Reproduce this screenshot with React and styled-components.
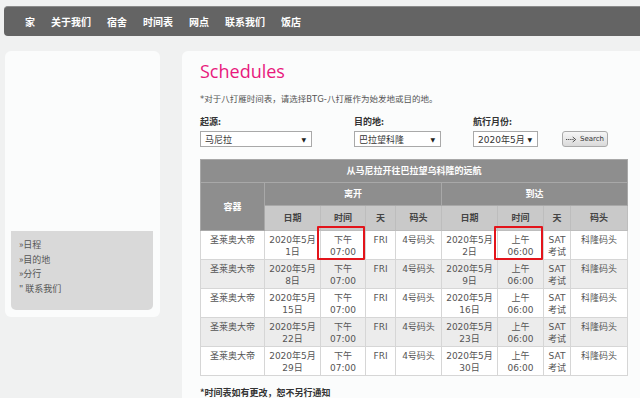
import styled, { createGlobalStyle } from "styled-components";

const GlobalStyle = createGlobalStyle`
  html, body {
    margin: 0;
    padding: 0;
    background: #f0f1f1;
    overflow: hidden;
  }
  body {
    font-family: "DejaVu Sans", "Noto Sans CJK SC", sans-serif;
    color: #555;
  }
`;

const navItems = ["家", "关于我们", "宿舍", "时间表", "网点", "联系我们", "饭店"];
const sideLinks = ["»日程", "»目的地", "»分行", "\" 联系我们"];

const rows = [
  { dep: "1日", arr: "2日" },
  { dep: "8日", arr: "9日" },
  { dep: "15日", arr: "16日" },
  { dep: "22日", arr: "23日" },
  { dep: "29日", arr: "30日" },
];

const Page = styled.div`
  width: 660px;
  padding: 6px 0 0 4px;
`;

const NavBar = styled.nav`
  height: 30px;
  background: #646464;
  border-radius: 4px 0 0 4px;
  border-top: 1px solid #8a8a8a;
  box-sizing: border-box;
  display: flex;
  align-items: center;
  gap: 16px;
  padding-left: 21px;
`;

const NavItem = styled.a`
  color: #fff;
  font-family: "Noto Sans CJK SC", sans-serif;
  font-weight: 700;
  font-size: 10px;
`;

const Body = styled.div`
  display: flex;
  gap: 22px;
  margin-top: 15px;
  align-items: flex-start;
`;

const Sidebar = styled.aside`
  width: 155px;
  height: 266px;
  margin-left: 1px;
  background: #fbfcfc;
  border-radius: 6px;
  box-sizing: border-box;
  display: flex;
  flex-direction: column;
  justify-content: flex-end;
  padding: 0 7px 7px 6px;
`;

const SideBox = styled.div`
  height: 79px;
  background: #d9d9d9;
  border-radius: 0 0 5px 5px;
  box-sizing: border-box;
  padding: 7px 8px;
  display: flex;
  flex-direction: column;
`;

const SideLink = styled.a`
  font-family: "Noto Sans CJK SC", sans-serif;
  font-size: 9px;
  line-height: 14.5px;
  color: #555;
`;

const Main = styled.main`
  flex: 1;
  height: 360px;
  background: #fbfcfc;
  border-radius: 6px 0 0 0;
  padding: 8px 0 0 18px;
  box-sizing: border-box;
`;

const Title = styled.h1`
  margin: 0;
  font-family: "Open Sans", sans-serif;
  font-weight: 400;
  font-size: 18px;
  line-height: 24px;
  color: #e8197d;
`;

const Note = styled.p`
  margin: 9px 0 0;
  font-family: "DejaVu Sans", "Noto Sans CJK SC", sans-serif;
  font-size: 8.5px;
  color: #555;
`;

const Form = styled.div`
  display: flex;
  align-items: flex-end;
  margin-top: 12px;
`;

const Field = styled.div`
  display: flex;
  flex-direction: column;
  width: ${(p) => p.w}px;
`;

const Label = styled.label`
  font-family: "Noto Sans CJK SC", sans-serif;
  font-weight: 700;
  font-size: 9px;
  color: #333;
  line-height: 12px;
  margin-bottom: 3px;
`;

const Select = styled.div`
  width: ${(p) => p.w}px;
  height: 16px;
  box-sizing: border-box;
  border: 1px solid #a9a9a9;
  background: #fff;
  display: flex;
  align-items: center;
  justify-content: space-between;
  padding: 0 5px 0 4px;
  font-family: "DejaVu Sans", "Noto Sans CJK SC", sans-serif;
  font-size: 9px;
  color: #333;

  &::after {
    content: "▼";
    font-size: 6px;
    color: #222;
  }
`;

const Button = styled.button`
  height: 16px;
  width: 46px;
  padding: 0 3px;
  border: 1px solid #aaa;
  border-radius: 3px;
  background: linear-gradient(#f6f6f6, #dadada);
  font-family: "DejaVu Sans", sans-serif;
  font-size: 7px;
  color: #333;
  display: flex;
  align-items: center;
  gap: 3px;
`;

const Table = styled.table`
  margin-top: 12px;
  border-collapse: collapse;
  table-layout: fixed;
  width: 427px;
  font-family: "DejaVu Sans", "Noto Sans CJK SC", sans-serif;
  font-size: 9px;
  line-height: 11.5px;
  color: #555;
`;

const HeadCell = styled.th`
  background: ${(p) => (p.light ? "#c9c9c9" : "#8e8e8e")};
  color: ${(p) => (p.light ? "#444" : "#fff")};
  font-family: "Noto Sans CJK SC", sans-serif;
  font-weight: 700;
  font-size: 9px;
  height: ${(p) => p.h || 22}px;
  padding: 0;
  border: 1px solid ${(p) => (p.light ? "#bdbdbd" : "#a8a8a8")};
`;

const Row = styled.tr`
  background: ${(p) => (p.alt ? "#ececec" : "#fff")};
`;

const Cell = styled.td`
  position: relative;
  height: 29px;
  box-sizing: border-box;
  vertical-align: top;
  text-align: center;
  padding: 4px 2px 0;
  border: 1px solid #d6d6d6;
`;

const Highlight = styled.span`
  position: absolute;
  top: -5px;
  left: -4px;
  right: 0;
  bottom: -1px;
  border: 2px solid #e3141b;
  border-radius: 1px;
`;

const Footer = styled.p`
  margin: 11px 0 0;
  font-family: "Noto Sans CJK SC", sans-serif;
  font-weight: 700;
  font-size: 9px;
  line-height: 12px;
  color: #333;
`;

const ArrowIcon = () => (
  <svg width="13" height="7" viewBox="0 0 13 7">
    <path d="M0 3.5h9" stroke="#333" strokeWidth="1" strokeDasharray="1.5 1" />
    <path d="M8 0.5l3.5 3-3.5 3" fill="none" stroke="#333" strokeWidth="1" />
  </svg>
);

const cols = [64, 56, 45, 30, 46, 56, 46, 27, 57];

export default function App() {
  return (
    <Page>
      <GlobalStyle />
      <NavBar>
        {navItems.map((n) => (
          <NavItem key={n}>{n}</NavItem>
        ))}
      </NavBar>
      <Body>
        <Sidebar>
          <SideBox>
            {sideLinks.map((l) => (
              <SideLink key={l}>{l}</SideLink>
            ))}
          </SideBox>
        </Sidebar>
        <Main>
          <Title>Schedules</Title>
          <Note>*对于八打雁时间表，请选择BTG-八打雁作为始发地或目的地。</Note>
          <Form>
            <Field w={154}>
              <Label>起源:</Label>
              <Select w={112}>马尼拉</Select>
            </Field>
            <Field w={119}>
              <Label>目的地:</Label>
              <Select w={87}>巴拉望科隆</Select>
            </Field>
            <Field w={89}>
              <Label>航行月份:</Label>
              <Select w={65}>2020年5月</Select>
            </Field>
            <Button>
              <ArrowIcon />
              Search
            </Button>
          </Form>
          <Table>
            <colgroup>
              {cols.map((w, i) => (
                <col key={i} style={{ width: w }} />
              ))}
            </colgroup>
            <thead>
              <tr>
                <HeadCell colSpan={9}>从马尼拉开往巴拉望乌科隆的远航</HeadCell>
              </tr>
              <tr>
                <HeadCell rowSpan={2}>容器</HeadCell>
                <HeadCell colSpan={4}>离开</HeadCell>
                <HeadCell colSpan={4}>到达</HeadCell>
              </tr>
              <tr>
                {["日期", "时间", "天", "码头", "日期", "时间", "天", "码头"].map((h, i) => (
                  <HeadCell key={i} light h={24}>
                    {h}
                  </HeadCell>
                ))}
              </tr>
            </thead>
            <tbody>
              {rows.map((r, i) => (
                <Row key={r.dep} alt={i % 2 === 1}>
                  <Cell>圣莱奥大帝</Cell>
                  <Cell>
                    2020年5月
                    <br />
                    {r.dep}
                  </Cell>
                  <Cell>
                    下午
                    <br />
                    07:00
                    {i === 0 && <Highlight />}
                  </Cell>
                  <Cell>FRI</Cell>
                  <Cell>4号码头</Cell>
                  <Cell>
                    2020年5月
                    <br />
                    {r.arr}
                  </Cell>
                  <Cell>
                    上午
                    <br />
                    06:00
                    {i === 0 && <Highlight />}
                  </Cell>
                  <Cell>
                    SAT
                    <br />
                    考试
                  </Cell>
                  <Cell>科隆码头</Cell>
                </Row>
              ))}
            </tbody>
          </Table>
          <Footer>*时间表如有更改，恕不另行通知</Footer>
        </Main>
      </Body>
    </Page>
  );
}
